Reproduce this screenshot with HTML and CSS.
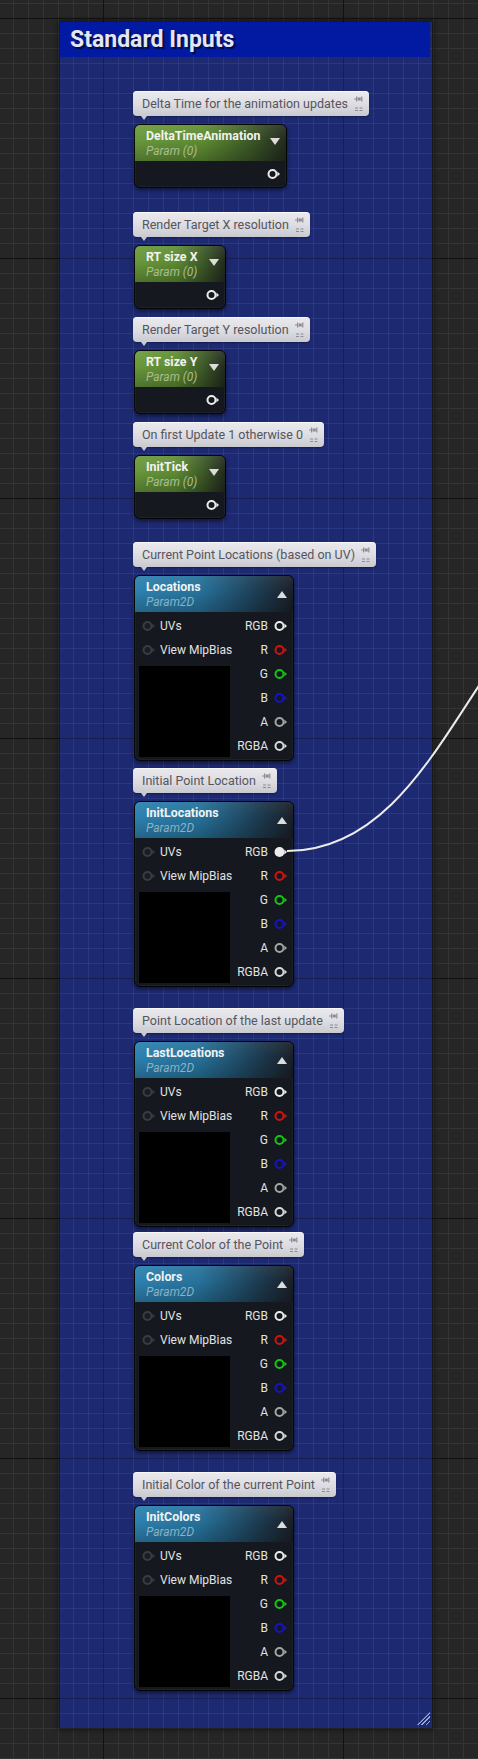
FILE: index.html
```html
<!DOCTYPE html>
<html>
<head>
<meta charset="utf-8">
<title>Standard Inputs</title>
<link rel="stylesheet" href="styles.css">
</head>
<body>
<div class="canvas">
  <section class="comment">
    <header class="comment-title">Standard Inputs</header>
    <div class="comment-body">

      <div class="group gap-34">
        <div class="bubble"><span class="bubble-text">Delta Time for the animation updates</span><svg class="bubble-ico" viewBox="0 0 10 20" width="10" height="20"><path d="M0 5h2" stroke="#8c8c94" stroke-width="1"/><rect x="2" y="2.5" width="1.2" height="5" fill="#8c8c94"/><rect x="3.6" y="3.5" width="3.2" height="3" fill="#8c8c94"/><rect x="7.2" y="2.5" width="1.2" height="5" fill="#8c8c94"/><path d="M1 14h3M5.5 14h3M1 16.5h3M5.5 16.5h3" stroke="#8c8c94" stroke-width="1"/></svg></div>
        <div class="node param w-wide">
          <div class="node-head green">
            <div class="titles"><div class="name">DeltaTimeAnimation</div><div class="sub">Param (0)</div></div>
            <span class="tri down"></span>
          </div>
          <div class="node-body single"><svg class="pin c-white" viewBox="0 0 14 12" width="14" height="12"><circle cx="5.5" cy="6" r="4" fill="none" stroke="currentColor" stroke-width="2"/><path d="M10.4 3.6L13 6l-2.6 2.4z" fill="currentColor"/></svg></div>
        </div>
      </div>

      <div class="group gap-24">
        <div class="bubble"><span class="bubble-text">Render Target X resolution</span><svg class="bubble-ico" viewBox="0 0 10 20" width="10" height="20"><path d="M0 5h2" stroke="#8c8c94" stroke-width="1"/><rect x="2" y="2.5" width="1.2" height="5" fill="#8c8c94"/><rect x="3.6" y="3.5" width="3.2" height="3" fill="#8c8c94"/><rect x="7.2" y="2.5" width="1.2" height="5" fill="#8c8c94"/><path d="M1 14h3M5.5 14h3M1 16.5h3M5.5 16.5h3" stroke="#8c8c94" stroke-width="1"/></svg></div>
        <div class="node param w-small">
          <div class="node-head green">
            <div class="titles"><div class="name">RT size X</div><div class="sub">Param (0)</div></div>
            <span class="tri down"></span>
          </div>
          <div class="node-body single"><svg class="pin c-white" viewBox="0 0 14 12" width="14" height="12"><circle cx="5.5" cy="6" r="4" fill="none" stroke="currentColor" stroke-width="2"/><path d="M10.4 3.6L13 6l-2.6 2.4z" fill="currentColor"/></svg></div>
        </div>
      </div>

      <div class="group gap-8">
        <div class="bubble"><span class="bubble-text">Render Target Y resolution</span><svg class="bubble-ico" viewBox="0 0 10 20" width="10" height="20"><path d="M0 5h2" stroke="#8c8c94" stroke-width="1"/><rect x="2" y="2.5" width="1.2" height="5" fill="#8c8c94"/><rect x="3.6" y="3.5" width="3.2" height="3" fill="#8c8c94"/><rect x="7.2" y="2.5" width="1.2" height="5" fill="#8c8c94"/><path d="M1 14h3M5.5 14h3M1 16.5h3M5.5 16.5h3" stroke="#8c8c94" stroke-width="1"/></svg></div>
        <div class="node param w-small">
          <div class="node-head green">
            <div class="titles"><div class="name">RT size Y</div><div class="sub">Param (0)</div></div>
            <span class="tri down"></span>
          </div>
          <div class="node-body single"><svg class="pin c-white" viewBox="0 0 14 12" width="14" height="12"><circle cx="5.5" cy="6" r="4" fill="none" stroke="currentColor" stroke-width="2"/><path d="M10.4 3.6L13 6l-2.6 2.4z" fill="currentColor"/></svg></div>
        </div>
      </div>

      <div class="group gap-8">
        <div class="bubble"><span class="bubble-text">On first Update 1 otherwise 0</span><svg class="bubble-ico" viewBox="0 0 10 20" width="10" height="20"><path d="M0 5h2" stroke="#8c8c94" stroke-width="1"/><rect x="2" y="2.5" width="1.2" height="5" fill="#8c8c94"/><rect x="3.6" y="3.5" width="3.2" height="3" fill="#8c8c94"/><rect x="7.2" y="2.5" width="1.2" height="5" fill="#8c8c94"/><path d="M1 14h3M5.5 14h3M1 16.5h3M5.5 16.5h3" stroke="#8c8c94" stroke-width="1"/></svg></div>
        <div class="node param w-small">
          <div class="node-head green">
            <div class="titles"><div class="name">InitTick</div><div class="sub">Param (0)</div></div>
            <span class="tri down"></span>
          </div>
          <div class="node-body single"><svg class="pin c-white" viewBox="0 0 14 12" width="14" height="12"><circle cx="5.5" cy="6" r="4" fill="none" stroke="currentColor" stroke-width="2"/><path d="M10.4 3.6L13 6l-2.6 2.4z" fill="currentColor"/></svg></div>
        </div>
      </div>

      <div class="group gap-23">
        <div class="bubble"><span class="bubble-text">Current Point Locations (based on UV)</span><svg class="bubble-ico" viewBox="0 0 10 20" width="10" height="20"><path d="M0 5h2" stroke="#8c8c94" stroke-width="1"/><rect x="2" y="2.5" width="1.2" height="5" fill="#8c8c94"/><rect x="3.6" y="3.5" width="3.2" height="3" fill="#8c8c94"/><rect x="7.2" y="2.5" width="1.2" height="5" fill="#8c8c94"/><path d="M1 14h3M5.5 14h3M1 16.5h3M5.5 16.5h3" stroke="#8c8c94" stroke-width="1"/></svg></div>
        <div class="node tex">
          <div class="node-head blue">
            <div class="titles"><div class="name">Locations</div><div class="sub">Param2D</div></div>
            <span class="tri up"></span>
          </div>
          <div class="node-body grid">
            <div class="inputs">
              <div class="row in"><svg class="pin c-in" viewBox="0 0 14 12" width="14" height="12"><circle cx="5.5" cy="6" r="4" fill="#1b1d22" stroke="currentColor" stroke-width="2"/><path d="M10.4 3.6L13 6l-2.6 2.4z" fill="currentColor"/></svg><span>UVs</span></div>
              <div class="row in"><svg class="pin c-in" viewBox="0 0 14 12" width="14" height="12"><circle cx="5.5" cy="6" r="4" fill="#1b1d22" stroke="currentColor" stroke-width="2"/><path d="M10.4 3.6L13 6l-2.6 2.4z" fill="currentColor"/></svg><span>View MipBias</span></div>
              <div class="preview"></div>
            </div>
            <div class="outputs">
              <div class="row out"><span>RGB</span><svg class="pin c-white" viewBox="0 0 14 12" width="14" height="12"><circle cx="5.5" cy="6" r="4" fill="none" stroke="currentColor" stroke-width="2"/><path d="M10.4 3.6L13 6l-2.6 2.4z" fill="currentColor"/></svg></div>
              <div class="row out"><span>R</span><svg class="pin c-red" viewBox="0 0 14 12" width="14" height="12"><circle cx="5.5" cy="6" r="4" fill="none" stroke="currentColor" stroke-width="2"/><path d="M10.4 3.6L13 6l-2.6 2.4z" fill="currentColor"/></svg></div>
              <div class="row out"><span>G</span><svg class="pin c-green" viewBox="0 0 14 12" width="14" height="12"><circle cx="5.5" cy="6" r="4" fill="none" stroke="currentColor" stroke-width="2"/><path d="M10.4 3.6L13 6l-2.6 2.4z" fill="currentColor"/></svg></div>
              <div class="row out"><span>B</span><svg class="pin c-blue" viewBox="0 0 14 12" width="14" height="12"><circle cx="5.5" cy="6" r="4" fill="none" stroke="currentColor" stroke-width="2"/><path d="M10.4 3.6L13 6l-2.6 2.4z" fill="currentColor"/></svg></div>
              <div class="row out"><span>A</span><svg class="pin c-grey" viewBox="0 0 14 12" width="14" height="12"><circle cx="5.5" cy="6" r="4" fill="none" stroke="currentColor" stroke-width="2"/><path d="M10.4 3.6L13 6l-2.6 2.4z" fill="currentColor"/></svg></div>
              <div class="row out"><span>RGBA</span><svg class="pin c-rgba" viewBox="0 0 14 12" width="14" height="12"><circle cx="5.5" cy="6" r="4" fill="none" stroke="currentColor" stroke-width="2"/><path d="M10.4 3.6L13 6l-2.6 2.4z" fill="currentColor"/></svg></div>
            </div>
          </div>
        </div>
      </div>

      <div class="group gap-7">
        <div class="bubble"><span class="bubble-text">Initial Point Location</span><svg class="bubble-ico" viewBox="0 0 10 20" width="10" height="20"><path d="M0 5h2" stroke="#8c8c94" stroke-width="1"/><rect x="2" y="2.5" width="1.2" height="5" fill="#8c8c94"/><rect x="3.6" y="3.5" width="3.2" height="3" fill="#8c8c94"/><rect x="7.2" y="2.5" width="1.2" height="5" fill="#8c8c94"/><path d="M1 14h3M5.5 14h3M1 16.5h3M5.5 16.5h3" stroke="#8c8c94" stroke-width="1"/></svg></div>
        <div class="node tex">
          <div class="node-head blue">
            <div class="titles"><div class="name">InitLocations</div><div class="sub">Param2D</div></div>
            <span class="tri up"></span>
          </div>
          <div class="node-body grid">
            <div class="inputs">
              <div class="row in"><svg class="pin c-in" viewBox="0 0 14 12" width="14" height="12"><circle cx="5.5" cy="6" r="4" fill="#1b1d22" stroke="currentColor" stroke-width="2"/><path d="M10.4 3.6L13 6l-2.6 2.4z" fill="currentColor"/></svg><span>UVs</span></div>
              <div class="row in"><svg class="pin c-in" viewBox="0 0 14 12" width="14" height="12"><circle cx="5.5" cy="6" r="4" fill="#1b1d22" stroke="currentColor" stroke-width="2"/><path d="M10.4 3.6L13 6l-2.6 2.4z" fill="currentColor"/></svg><span>View MipBias</span></div>
              <div class="preview"></div>
            </div>
            <div class="outputs">
              <div class="row out"><span>RGB</span><svg class="pin c-white" viewBox="0 0 14 12" width="14" height="12"><circle cx="5.5" cy="6" r="5" fill="currentColor"/><path d="M10.4 3.6L13 6l-2.6 2.4z" fill="currentColor"/></svg></div>
              <div class="row out"><span>R</span><svg class="pin c-red" viewBox="0 0 14 12" width="14" height="12"><circle cx="5.5" cy="6" r="4" fill="none" stroke="currentColor" stroke-width="2"/><path d="M10.4 3.6L13 6l-2.6 2.4z" fill="currentColor"/></svg></div>
              <div class="row out"><span>G</span><svg class="pin c-green" viewBox="0 0 14 12" width="14" height="12"><circle cx="5.5" cy="6" r="4" fill="none" stroke="currentColor" stroke-width="2"/><path d="M10.4 3.6L13 6l-2.6 2.4z" fill="currentColor"/></svg></div>
              <div class="row out"><span>B</span><svg class="pin c-blue" viewBox="0 0 14 12" width="14" height="12"><circle cx="5.5" cy="6" r="4" fill="none" stroke="currentColor" stroke-width="2"/><path d="M10.4 3.6L13 6l-2.6 2.4z" fill="currentColor"/></svg></div>
              <div class="row out"><span>A</span><svg class="pin c-grey" viewBox="0 0 14 12" width="14" height="12"><circle cx="5.5" cy="6" r="4" fill="none" stroke="currentColor" stroke-width="2"/><path d="M10.4 3.6L13 6l-2.6 2.4z" fill="currentColor"/></svg></div>
              <div class="row out"><span>RGBA</span><svg class="pin c-rgba" viewBox="0 0 14 12" width="14" height="12"><circle cx="5.5" cy="6" r="4" fill="none" stroke="currentColor" stroke-width="2"/><path d="M10.4 3.6L13 6l-2.6 2.4z" fill="currentColor"/></svg></div>
            </div>
          </div>
        </div>
      </div>

      <div class="group gap-21">
        <div class="bubble"><span class="bubble-text">Point Location of the last update</span><svg class="bubble-ico" viewBox="0 0 10 20" width="10" height="20"><path d="M0 5h2" stroke="#8c8c94" stroke-width="1"/><rect x="2" y="2.5" width="1.2" height="5" fill="#8c8c94"/><rect x="3.6" y="3.5" width="3.2" height="3" fill="#8c8c94"/><rect x="7.2" y="2.5" width="1.2" height="5" fill="#8c8c94"/><path d="M1 14h3M5.5 14h3M1 16.5h3M5.5 16.5h3" stroke="#8c8c94" stroke-width="1"/></svg></div>
        <div class="node tex">
          <div class="node-head blue">
            <div class="titles"><div class="name">LastLocations</div><div class="sub">Param2D</div></div>
            <span class="tri up"></span>
          </div>
          <div class="node-body grid">
            <div class="inputs">
              <div class="row in"><svg class="pin c-in" viewBox="0 0 14 12" width="14" height="12"><circle cx="5.5" cy="6" r="4" fill="#1b1d22" stroke="currentColor" stroke-width="2"/><path d="M10.4 3.6L13 6l-2.6 2.4z" fill="currentColor"/></svg><span>UVs</span></div>
              <div class="row in"><svg class="pin c-in" viewBox="0 0 14 12" width="14" height="12"><circle cx="5.5" cy="6" r="4" fill="#1b1d22" stroke="currentColor" stroke-width="2"/><path d="M10.4 3.6L13 6l-2.6 2.4z" fill="currentColor"/></svg><span>View MipBias</span></div>
              <div class="preview"></div>
            </div>
            <div class="outputs">
              <div class="row out"><span>RGB</span><svg class="pin c-white" viewBox="0 0 14 12" width="14" height="12"><circle cx="5.5" cy="6" r="4" fill="none" stroke="currentColor" stroke-width="2"/><path d="M10.4 3.6L13 6l-2.6 2.4z" fill="currentColor"/></svg></div>
              <div class="row out"><span>R</span><svg class="pin c-red" viewBox="0 0 14 12" width="14" height="12"><circle cx="5.5" cy="6" r="4" fill="none" stroke="currentColor" stroke-width="2"/><path d="M10.4 3.6L13 6l-2.6 2.4z" fill="currentColor"/></svg></div>
              <div class="row out"><span>G</span><svg class="pin c-green" viewBox="0 0 14 12" width="14" height="12"><circle cx="5.5" cy="6" r="4" fill="none" stroke="currentColor" stroke-width="2"/><path d="M10.4 3.6L13 6l-2.6 2.4z" fill="currentColor"/></svg></div>
              <div class="row out"><span>B</span><svg class="pin c-blue" viewBox="0 0 14 12" width="14" height="12"><circle cx="5.5" cy="6" r="4" fill="none" stroke="currentColor" stroke-width="2"/><path d="M10.4 3.6L13 6l-2.6 2.4z" fill="currentColor"/></svg></div>
              <div class="row out"><span>A</span><svg class="pin c-grey" viewBox="0 0 14 12" width="14" height="12"><circle cx="5.5" cy="6" r="4" fill="none" stroke="currentColor" stroke-width="2"/><path d="M10.4 3.6L13 6l-2.6 2.4z" fill="currentColor"/></svg></div>
              <div class="row out"><span>RGBA</span><svg class="pin c-rgba" viewBox="0 0 14 12" width="14" height="12"><circle cx="5.5" cy="6" r="4" fill="none" stroke="currentColor" stroke-width="2"/><path d="M10.4 3.6L13 6l-2.6 2.4z" fill="currentColor"/></svg></div>
            </div>
          </div>
        </div>
      </div>

      <div class="group gap-5">
        <div class="bubble"><span class="bubble-text">Current Color of the Point</span><svg class="bubble-ico" viewBox="0 0 10 20" width="10" height="20"><path d="M0 5h2" stroke="#8c8c94" stroke-width="1"/><rect x="2" y="2.5" width="1.2" height="5" fill="#8c8c94"/><rect x="3.6" y="3.5" width="3.2" height="3" fill="#8c8c94"/><rect x="7.2" y="2.5" width="1.2" height="5" fill="#8c8c94"/><path d="M1 14h3M5.5 14h3M1 16.5h3M5.5 16.5h3" stroke="#8c8c94" stroke-width="1"/></svg></div>
        <div class="node tex">
          <div class="node-head blue">
            <div class="titles"><div class="name">Colors</div><div class="sub">Param2D</div></div>
            <span class="tri up"></span>
          </div>
          <div class="node-body grid">
            <div class="inputs">
              <div class="row in"><svg class="pin c-in" viewBox="0 0 14 12" width="14" height="12"><circle cx="5.5" cy="6" r="4" fill="#1b1d22" stroke="currentColor" stroke-width="2"/><path d="M10.4 3.6L13 6l-2.6 2.4z" fill="currentColor"/></svg><span>UVs</span></div>
              <div class="row in"><svg class="pin c-in" viewBox="0 0 14 12" width="14" height="12"><circle cx="5.5" cy="6" r="4" fill="#1b1d22" stroke="currentColor" stroke-width="2"/><path d="M10.4 3.6L13 6l-2.6 2.4z" fill="currentColor"/></svg><span>View MipBias</span></div>
              <div class="preview"></div>
            </div>
            <div class="outputs">
              <div class="row out"><span>RGB</span><svg class="pin c-white" viewBox="0 0 14 12" width="14" height="12"><circle cx="5.5" cy="6" r="4" fill="none" stroke="currentColor" stroke-width="2"/><path d="M10.4 3.6L13 6l-2.6 2.4z" fill="currentColor"/></svg></div>
              <div class="row out"><span>R</span><svg class="pin c-red" viewBox="0 0 14 12" width="14" height="12"><circle cx="5.5" cy="6" r="4" fill="none" stroke="currentColor" stroke-width="2"/><path d="M10.4 3.6L13 6l-2.6 2.4z" fill="currentColor"/></svg></div>
              <div class="row out"><span>G</span><svg class="pin c-green" viewBox="0 0 14 12" width="14" height="12"><circle cx="5.5" cy="6" r="4" fill="none" stroke="currentColor" stroke-width="2"/><path d="M10.4 3.6L13 6l-2.6 2.4z" fill="currentColor"/></svg></div>
              <div class="row out"><span>B</span><svg class="pin c-blue" viewBox="0 0 14 12" width="14" height="12"><circle cx="5.5" cy="6" r="4" fill="none" stroke="currentColor" stroke-width="2"/><path d="M10.4 3.6L13 6l-2.6 2.4z" fill="currentColor"/></svg></div>
              <div class="row out"><span>A</span><svg class="pin c-grey" viewBox="0 0 14 12" width="14" height="12"><circle cx="5.5" cy="6" r="4" fill="none" stroke="currentColor" stroke-width="2"/><path d="M10.4 3.6L13 6l-2.6 2.4z" fill="currentColor"/></svg></div>
              <div class="row out"><span>RGBA</span><svg class="pin c-rgba" viewBox="0 0 14 12" width="14" height="12"><circle cx="5.5" cy="6" r="4" fill="none" stroke="currentColor" stroke-width="2"/><path d="M10.4 3.6L13 6l-2.6 2.4z" fill="currentColor"/></svg></div>
            </div>
          </div>
        </div>
      </div>

      <div class="group gap-21">
        <div class="bubble"><span class="bubble-text">Initial Color of the current Point</span><svg class="bubble-ico" viewBox="0 0 10 20" width="10" height="20"><path d="M0 5h2" stroke="#8c8c94" stroke-width="1"/><rect x="2" y="2.5" width="1.2" height="5" fill="#8c8c94"/><rect x="3.6" y="3.5" width="3.2" height="3" fill="#8c8c94"/><rect x="7.2" y="2.5" width="1.2" height="5" fill="#8c8c94"/><path d="M1 14h3M5.5 14h3M1 16.5h3M5.5 16.5h3" stroke="#8c8c94" stroke-width="1"/></svg></div>
        <div class="node tex">
          <div class="node-head blue">
            <div class="titles"><div class="name">InitColors</div><div class="sub">Param2D</div></div>
            <span class="tri up"></span>
          </div>
          <div class="node-body grid">
            <div class="inputs">
              <div class="row in"><svg class="pin c-in" viewBox="0 0 14 12" width="14" height="12"><circle cx="5.5" cy="6" r="4" fill="#1b1d22" stroke="currentColor" stroke-width="2"/><path d="M10.4 3.6L13 6l-2.6 2.4z" fill="currentColor"/></svg><span>UVs</span></div>
              <div class="row in"><svg class="pin c-in" viewBox="0 0 14 12" width="14" height="12"><circle cx="5.5" cy="6" r="4" fill="#1b1d22" stroke="currentColor" stroke-width="2"/><path d="M10.4 3.6L13 6l-2.6 2.4z" fill="currentColor"/></svg><span>View MipBias</span></div>
              <div class="preview"></div>
            </div>
            <div class="outputs">
              <div class="row out"><span>RGB</span><svg class="pin c-white" viewBox="0 0 14 12" width="14" height="12"><circle cx="5.5" cy="6" r="4" fill="none" stroke="currentColor" stroke-width="2"/><path d="M10.4 3.6L13 6l-2.6 2.4z" fill="currentColor"/></svg></div>
              <div class="row out"><span>R</span><svg class="pin c-red" viewBox="0 0 14 12" width="14" height="12"><circle cx="5.5" cy="6" r="4" fill="none" stroke="currentColor" stroke-width="2"/><path d="M10.4 3.6L13 6l-2.6 2.4z" fill="currentColor"/></svg></div>
              <div class="row out"><span>G</span><svg class="pin c-green" viewBox="0 0 14 12" width="14" height="12"><circle cx="5.5" cy="6" r="4" fill="none" stroke="currentColor" stroke-width="2"/><path d="M10.4 3.6L13 6l-2.6 2.4z" fill="currentColor"/></svg></div>
              <div class="row out"><span>B</span><svg class="pin c-blue" viewBox="0 0 14 12" width="14" height="12"><circle cx="5.5" cy="6" r="4" fill="none" stroke="currentColor" stroke-width="2"/><path d="M10.4 3.6L13 6l-2.6 2.4z" fill="currentColor"/></svg></div>
              <div class="row out"><span>A</span><svg class="pin c-grey" viewBox="0 0 14 12" width="14" height="12"><circle cx="5.5" cy="6" r="4" fill="none" stroke="currentColor" stroke-width="2"/><path d="M10.4 3.6L13 6l-2.6 2.4z" fill="currentColor"/></svg></div>
              <div class="row out"><span>RGBA</span><svg class="pin c-rgba" viewBox="0 0 14 12" width="14" height="12"><circle cx="5.5" cy="6" r="4" fill="none" stroke="currentColor" stroke-width="2"/><path d="M10.4 3.6L13 6l-2.6 2.4z" fill="currentColor"/></svg></div>
            </div>
          </div>
        </div>
      </div>

    </div>
    <span class="grip"></span>
  </section>
</div>
<svg class="wires" viewBox="0 0 478 1759" width="478" height="1759">
  <path d="M287 851 C 380 851, 430 760, 480 684" fill="none" stroke="#ececec" stroke-width="2"/>
</svg>
</body>
</html>
```

FILE: styles.css
```css
html, body {
  margin: 0;
  padding: 0;
}

body {
  width: 478px;
  height: 1759px;
  overflow: hidden;
  position: relative;
  font-family: Roboto, "Liberation Sans", Arial, sans-serif;
  background-color: #262626;
  background-image:
    linear-gradient(to right, #121212 0 1px, transparent 1px),
    linear-gradient(to bottom, #121212 0 1px, transparent 1px),
    linear-gradient(to right, #343434 0 1px, transparent 1px),
    linear-gradient(to bottom, #343434 0 1px, transparent 1px);
  background-size: 240px 100%, 100% 240px, 15px 100%, 100% 15px;
  background-position: 103px 0, 0 18px, 13px 0, 0 3px;
}

.canvas {
  padding: 22px 0 0 60px;
}

.comment {
  position: relative;
  width: 372px;
  height: 1706px;
  background-color: #1d2a72;
  background-image:
    linear-gradient(to right, rgba(0, 0, 20, 0.45) 0 1px, transparent 1px),
    linear-gradient(to bottom, rgba(0, 0, 20, 0.45) 0 1px, transparent 1px),
    linear-gradient(to right, rgba(150, 170, 255, 0.11) 0 1px, transparent 1px),
    linear-gradient(to bottom, rgba(150, 170, 255, 0.11) 0 1px, transparent 1px);
  background-size: 240px 100%, 100% 240px, 15px 100%, 100% 15px;
  background-position: 43px 0, 0 236px, 13px 0, 0 11px;
  box-shadow: 0 0 5px 2px rgba(0, 0, 0, 0.45);
}

.comment-title {
  height: 35px;
  margin-right: 2px;
  padding-left: 10px;
  background: #0219a2;
  color: #e4e6f2;
  font-size: 23px;
  font-weight: 700;
  line-height: 35px;
  text-shadow: 2px 2px 1px rgba(0, 0, 0, 0.55);
}

.comment-body {
  padding: 0 0 0 73px;
  display: flex;
  flex-direction: column;
  align-items: flex-start;
}

.group {
  display: flex;
  flex-direction: column;
  align-items: flex-start;
}

.gap-34 { margin-top: 34px; }
.gap-24 { margin-top: 24px; }
.gap-23 { margin-top: 23px; }
.gap-21 { margin-top: 21px; }
.gap-8 { margin-top: 8px; }
.gap-7 { margin-top: 7px; }
.gap-5 { margin-top: 5px; }

/* comment bubble */
.bubble {
  position: relative;
  display: flex;
  align-items: center;
  height: 25px;
  padding: 0 5px 0 9px;
  gap: 6px;
  border-radius: 4px;
  background: linear-gradient(to bottom, #eaeaee 0%, #dcdce2 55%, #c9c9d1 100%);
  box-shadow: inset 0 1px 0 rgba(255, 255, 255, 0.7), 0 1px 2px rgba(0, 0, 0, 0.35);
  color: #55555d;
  font-size: 12.5px;
  white-space: nowrap;
}

.bubble::after {
  content: "";
  position: absolute;
  left: 8px;
  bottom: -4px;
  border-left: 3px solid transparent;
  border-right: 3px solid transparent;
  border-top: 4px solid #c9c9d1;
}

.bubble-text {
  line-height: 25px;
}

.bubble-ico {
  display: block;
  margin-top: 1px;
}

/* nodes */
.node {
  margin-top: 8px;
  margin-left: 1px;
  border: 1px solid #050608;
  border-radius: 6px;
  background: #15181e;
  box-shadow: 0 2px 4px rgba(0, 0, 0, 0.55), inset 0 0 0 1px rgba(255, 255, 255, 0.04);
  overflow: hidden;
  color: #e6e6e6;
}

.w-wide { width: 151px; }
.w-small { width: 90px; }
.tex { width: 158px; }

.node-head {
  height: 36px;
  display: flex;
  align-items: center;
  justify-content: space-between;
  padding: 0 6px 0 11px;
  box-sizing: border-box;
}

.titles {
  align-self: flex-start;
  padding-top: 4px;
}

.name {
  font-size: 12.4px;
  font-weight: 700;
  line-height: 14px;
  color: #f2f2f2;
  white-space: nowrap;
}

.sub {
  font-size: 12px;
  font-style: italic;
  line-height: 16px;
  white-space: nowrap;
}

.green {
  background:
    linear-gradient(to bottom, rgba(255, 255, 255, 0.08) 0%, rgba(0, 0, 0, 0) 40%, rgba(0, 0, 0, 0.25) 100%),
    linear-gradient(to right, #6a9a3c 0%, #5f8d33 45%, #3e5c28 75%, #232b1f 100%);
}
.green .sub { color: #a8bd90; }

.blue {
  background:
    linear-gradient(to bottom, rgba(255, 255, 255, 0.06) 0%, rgba(0, 0, 0, 0) 40%, rgba(0, 0, 0, 0.22) 100%),
    linear-gradient(to right, #2e82b0 0%, #27739c 40%, #1d3c52 78%, #1a1f27 100%);
}
.blue .sub { color: #88b2c6; }

.tri {
  display: block;
  width: 0;
  height: 0;
  border-left: 5px solid transparent;
  border-right: 5px solid transparent;
}
.tri.down {
  border-top: 7px solid #dcdcdc;
  margin-top: -3px;
}
.tri.up {
  border-bottom: 7px solid #dcdcdc;
}

.node-body.single {
  height: 26px;
  display: flex;
  align-items: center;
  justify-content: flex-end;
  padding-right: 5px;
}

.pin {
  display: block;
  flex: none;
}
.c-white { color: #ececec; }
.c-red { color: #d21212; }
.c-green { color: #14c414; }
.c-blue { color: #1414c8; }
.c-grey { color: #a4a4a4; }
.c-rgba { color: #d8d8d8; }
.c-in { color: #3a3c40; }

.node-body.grid {
  display: grid;
  grid-template-columns: 1fr auto;
  padding: 2px 0 2px 0;
}

.row {
  height: 24px;
  display: flex;
  align-items: center;
  font-size: 12px;
  color: #e2e2e2;
  white-space: nowrap;
}

.row.in {
  padding-left: 7px;
  gap: 4px;
}

.row.out {
  justify-content: flex-end;
  padding-right: 5px;
  gap: 6px;
}

.preview {
  width: 91px;
  height: 91px;
  margin: 4px 0 0 4px;
  background: #000;
}

.grip {
  position: absolute;
  right: 2px;
  bottom: 3px;
  width: 13px;
  height: 13px;
  background: repeating-linear-gradient(135deg, rgba(200, 210, 255, 0.75) 0 1px, transparent 1px 3px);
  clip-path: polygon(100% 0, 100% 100%, 0 100%);
}

.wires {
  position: absolute;
  left: 0;
  top: 0;
  pointer-events: none;
}
```
